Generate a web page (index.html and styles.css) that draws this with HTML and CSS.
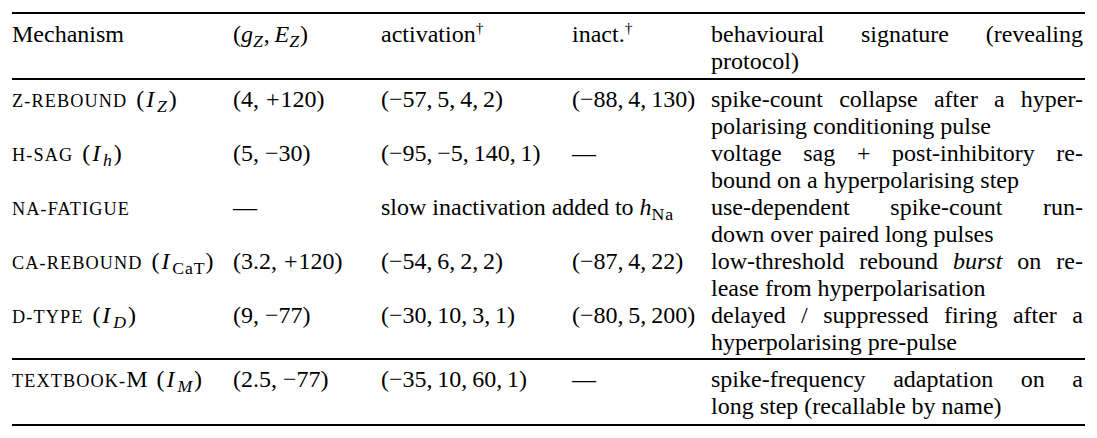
FILE: index.html
```html
<!DOCTYPE html>
<html lang="en">
<head>
<meta charset="utf-8">
<title>Mechanisms table</title>
<link rel="stylesheet" href="styles.css">
</head>
<body>
<div class="tbl">
  <div class="rule"></div>
  <div class="grp head">
    <div class="row">
      <div class="c">Mechanism</div>
      <div class="c">(<i>g</i><span class="sub"><i>Z</i></span>,&#8201;<i>E</i><span class="sub"><i>Z</i></span>)</div>
      <div class="c">activation<span class="sup">&#8224;</span></div>
      <div class="c">inact.<span class="sup">&#8224;</span></div>
      <div class="c sig"><div class="j">behavioural signature (revealing</div><div>protocol)</div></div>
    </div>
  </div>
  <div class="rule"></div>
  <div class="grp main">
    <div class="row">
      <div class="c"><span class="sc">z-rebound</span> <span class="mt">(<i>I</i><span class="sub"><i>Z</i></span>)</span></div>
      <div class="c">(4, <span class="op">+</span>120)</div>
      <div class="c">(&#8722;57,&#8201;5,&#8201;4,&#8201;2)</div>
      <div class="c">(&#8722;88,&#8201;4,&#8201;130)</div>
      <div class="c sig"><div class="j">spike-count collapse after a hyper-</div><div>polarising conditioning pulse</div></div>
    </div>
    <div class="row">
      <div class="c"><span class="sc">h-sag</span> <span class="mt">(<i>I</i><span class="sub"><i>h</i></span>)</span></div>
      <div class="c">(5, &#8722;30)</div>
      <div class="c">(&#8722;95,&#8201;&#8722;5,&#8201;140,&#8201;1)</div>
      <div class="c">&#8212;</div>
      <div class="c sig"><div class="j">voltage sag + post-inhibitory re-</div><div>bound on a hyperpolarising step</div></div>
    </div>
    <div class="row">
      <div class="c"><span class="sc">na-fatigue</span></div>
      <div class="c">&#8212;</div>
      <div class="c span2">slow inactivation added to <i>h</i><span class="sub">Na</span></div>
      <div class="c sig"><div class="j">use-dependent spike-count run-</div><div>down over paired long pulses</div></div>
    </div>
    <div class="row">
      <div class="c"><span class="sc">ca-rebound</span> <span class="mt">(<i>I</i><span class="sub">CaT</span>)</span></div>
      <div class="c">(3.2, <span class="op">+</span>120)</div>
      <div class="c">(&#8722;54,&#8201;6,&#8201;2,&#8201;2)</div>
      <div class="c">(&#8722;87,&#8201;4,&#8201;22)</div>
      <div class="c sig"><div class="j">low-threshold rebound <i>burst</i> on re-</div><div>lease from hyperpolarisation</div></div>
    </div>
    <div class="row">
      <div class="c"><span class="sc">d-type</span> <span class="mt">(<i>I</i><span class="sub"><i>D</i></span>)</span></div>
      <div class="c">(9, &#8722;77)</div>
      <div class="c">(&#8722;30,&#8201;10,&#8201;3,&#8201;1)</div>
      <div class="c">(&#8722;80,&#8201;5,&#8201;200)</div>
      <div class="c sig"><div class="j">delayed / suppressed firing after a</div><div>hyperpolarising pre-pulse</div></div>
    </div>
  </div>
  <div class="rule"></div>
  <div class="grp last">
    <div class="row">
      <div class="c"><span class="sc">textbook-</span>M <span class="mt">(<i>I</i><span class="sub"><i>M</i></span>)</span></div>
      <div class="c">(2.5, &#8722;77)</div>
      <div class="c">(&#8722;35,&#8201;10,&#8201;60,&#8201;1)</div>
      <div class="c">&#8212;</div>
      <div class="c sig"><div class="j">spike-frequency adaptation on a</div><div>long step (recallable by name)</div></div>
    </div>
  </div>
  <div class="rule"></div>
</div>
</body>
</html>
```
FILE: styles.css
```css
html, body {
  margin: 0;
  background: #ffffff;
}

body {
  font-family: "Liberation Serif", Tinos, "DejaVu Serif", serif;
  font-size: 24px;
  color: #000000;
}

.tbl {
  margin: 12px 0 0 12px;
  width: 1073px;
}

.rule {
  height: 2px;
  background: #000000;
}

.grp.head {
  padding: 7px 0 3px;
}

.grp.main {
  padding: 6px 0 2px;
}

.grp.last {
  padding: 6px 0 4px;
}

.row {
  display: grid;
  grid-template-columns: 221px 148px 191px 139px 374px;
  line-height: 27px;
}

.c {
  white-space: nowrap;
}

.span2 {
  grid-column: span 2;
}

.sig {
  padding-right: 2px;
}

.j {
  text-align: justify;
  text-align-last: justify;
}

.sc {
  text-transform: uppercase;
  font-size: 76%;
  letter-spacing: 0.06em;
}

.mt {
  margin-left: 3px;
  letter-spacing: 0.08em;
}

.mt i {
  margin-right: 1px;
}

.op {
  padding: 0 1px;
}

.sub {
  font-size: 74%;
  letter-spacing: 0.05em;
  vertical-align: -0.3em;
  line-height: 0;
}

.sup {
  font-size: 65%;
  vertical-align: 0.55em;
  line-height: 0;
}
```
